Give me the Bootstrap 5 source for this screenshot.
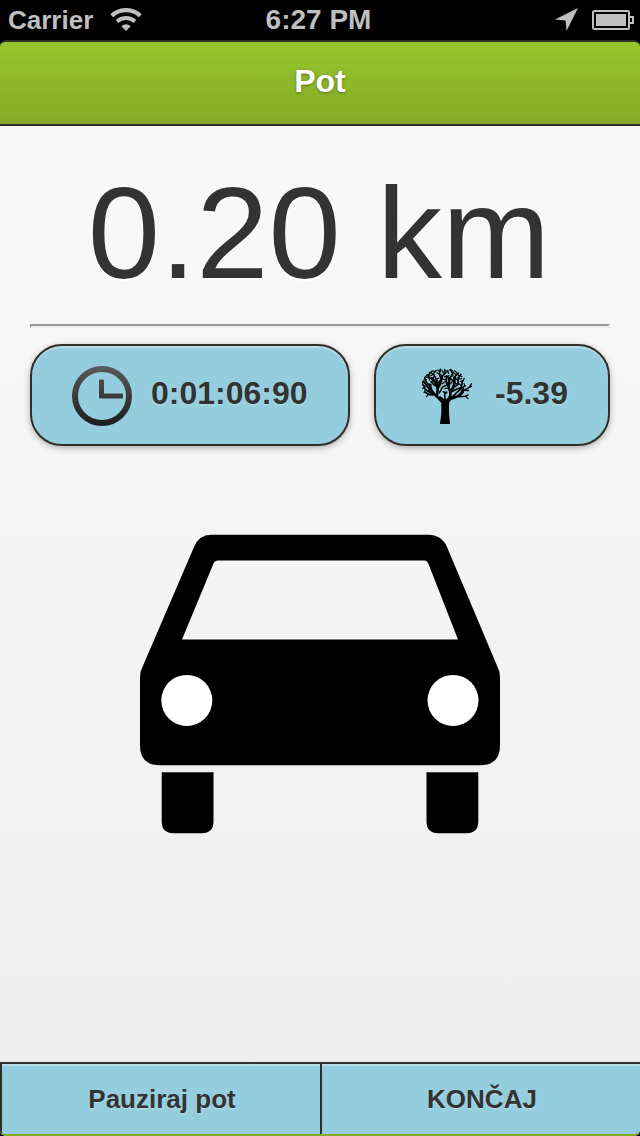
<!DOCTYPE html>
<html lang="sl">
<head>
<meta charset="utf-8">
<meta name="viewport" content="width=device-width, initial-scale=1">
<title>Pot</title>
<link rel="stylesheet" href="https://cdn.jsdelivr.net/npm/bootstrap@5.3.0/dist/css/bootstrap.min.css">
<style>
  body { font-family: "Liberation Sans", Arial, sans-serif; color: #333; background: #000; overflow: hidden; }
  .phone { width: 640px; height: 1136px; background: #000; }
  .statusbar { height: 40px; color: #bfbfbf; font-size: 26px; line-height: 40px; padding: 0 6px 0 8px; }
  .statusbar > div { flex: 1 1 0; }
  .wifi { margin-left: 17px; }
  .clock-text { font-size: 28px; margin-left: -5px; }
  .locate { margin: 0 14px 2px 0; }
  .titlebar { height: 86px; border-top: 2px solid #332e2a; border-bottom: 2px solid #332e2a; border-radius: 6px 6px 0 0;
    background: linear-gradient(#96c62d, #84ab26); color: #fff; font-size: 32px; text-shadow: 0 1px 3px #53701a; padding-bottom: 5px; }
  .page-main { background: linear-gradient(#f9f9f9, #eee); padding: 0 30px; }
  .distance { height: 198px; padding-top: 42px; font-size: 130px; line-height: 130px; text-shadow: 0 2px 0 #fff; white-space: nowrap; margin-left: -2px; }
  .rule { height: 4px; border: 2px solid; border-color: #999 #eee #eee #999; margin-bottom: 16px; }
  .pill { height: 102px; border: 2px solid #332e2a; border-radius: 32px; background: #94cede; font-size: 32px; line-height: 1;
    text-shadow: 0 1px 2px #b4dde7; box-shadow: 0 2px 6px rgba(0,0,0,.3), inset 0 2px 0 rgba(255,255,255,.3); }
  .pill-time { width: 320px; padding-left: 40px; }
  .pill-tree { width: 236px; padding-left: 46px; }
  .pill span { margin-top: -4px; }
  .pill-time span { margin-left: 17px; }
  .pill-tree span { margin-left: 23px; }
  .tree { margin-top: 2px; }
  .car { margin-top: 88px; }
  .actions { height: 74px; border-top: 2px solid #332e2a; border-bottom: 2px solid #84ab26; border-radius: 0 0 5px 5px; overflow: hidden; }
  .actions .btn { border: 0; border-left: 2px solid #332e2a; background: #94cede; color: #333; font-size: 26px; line-height: 1;
    text-shadow: 0 1px 2px #b4dde7; box-shadow: inset 0 2px 0 rgba(255,255,255,.3); padding: 0 0 1px 2px; }
</style>
</head>
<body>
<div class="phone d-flex flex-column">
  <div class="statusbar d-flex fw-bold flex-shrink-0">
    <div class="d-flex align-items-center">Carrier
      <svg class="wifi" width="32" height="24" viewBox="0 0 32 24" fill="none" stroke="#bfbfbf">
        <path d="M1.700 7.700A21 21 0 0 1 30.300 7.700" stroke-width="4.200"/>
        <path d="M7 13.500A13 13 0 0 1 25 13.500" stroke-width="4"/>
        <path d="M11.300 18.300Q16 14 20.700 18.300L16 23Z" fill="#bfbfbf" stroke="none"/>
      </svg>
    </div>
    <div class="clock-text text-center">6:27 PM</div>
    <div class="d-flex align-items-center justify-content-end">
      <svg class="locate" width="23" height="23" viewBox="0 0 23 23"><path d="M23 0 11.500 23 10.500 12.500 0 11.500Z" fill="#bfbfbf"/></svg>
      <svg width="42" height="20" viewBox="0 0 42 20"><rect x="1" y="1" width="36" height="18" rx="1.5" fill="none" stroke="#bfbfbf" stroke-width="2"/><path d="M4 4H34V16H4Z" fill="#bfbfbf"/><path d="M38 7H41V13H38" fill="none" stroke="#bfbfbf" stroke-width="2"/></svg>
    </div>
  </div>

  <header class="titlebar d-flex align-items-center justify-content-center fw-bold flex-shrink-0">Pot</header>

  <main class="page-main flex-grow-1">
    <div class="distance text-center">0.20 km</div>
    <div class="rule"></div>
    <div class="d-flex justify-content-between">
      <div class="pill pill-time d-flex align-items-center fw-bold">
        <svg width="62" height="62" viewBox="0 0 62 62">
          <defs><linearGradient id="dial" x1="0" y1="0" x2="0" y2="62" gradientUnits="userSpaceOnUse"><stop offset="0" stop-color="#5c5c5c"/><stop offset="1" stop-color="#1c1c1c"/></linearGradient></defs>
          <circle cx="30" cy="32" r="27" fill="none" stroke="url(#dial)" stroke-width="6"/>
          <path d="M28 15.500H31Q32 15.500 32 16.500V29.500H50Q51 29.500 51 30.500V33.500Q51 34.500 50 34.500H28.500Q27 34.500 27 33V16.500Q27 15.500 28 15.500Z" fill="url(#dial)"/>
        </svg>
        <span>0:01:06:90</span>
      </div>
      <div class="pill pill-tree d-flex align-items-center fw-bold">
        <svg class="tree" width="50" height="56" viewBox="36 25 150 168" fill="none" stroke="#000" stroke-linecap="round">
          <path d="M90 193Q96 160 94 130L82 112 92 110 105 121 121 108 132 111 118 128Q115 145 120 193Z" fill="#000" stroke="none"/>
          <g stroke-width="8">
            <path d="M96 126Q84 112 72 102Q62 94 60 78M80 108Q86 90 80 75L66 56M83 85Q93 72 95 52"/>
            <path d="M116 123Q126 100 116 84L118 55M124 116Q145 112 158 98M121 98Q132 83 134 68"/>
          </g>
          <g stroke-width="4.800">
            <path d="M72 102Q55 99 45 87L38 73M60 80L48 66 44 54M67 60L55 50 60 38M80 75L78 58 70 42 78 33M94 60L88 43 91 29M95 52L106 39 104 30M85 84L72 76 63 66M60 93L50 77 39 65M77 106L58 105 46 98M88 100L97 83 112 75"/>
            <path d="M117 84L108 68 110 48M118 57L128 43 122 30M134 69L132 54 145 40M130 84L145 74 144 56 153 44M125 96L139 89 154 83 157 65M145 111L166 110 174 106M146 106L162 92 184 80M153 98L160 87M105 120L104 104 110 97M109 100L100 96M128 111L143 96 165 78M133 67L121 56"/>
          </g>
          <g stroke-width="3.400">
            <path d="M45 87L37 85M46 91L42 99M48 66L38 69M44 55L51 45M57 51L49 53M59 41L67 34M71 43L62 48M78 58L87 55M88 43L81 39M79 73L89 65M95 53L101 59M105 40L115 34M98 50L91 44M110 48L103 52M109 55L117 47M126 43L133 34M132 54L140 59M143 43L136 34M145 58L155 57M144 64L136 54M154 82L148 90M157 68L163 56M162 92L176 93M167 110L174 117M165 80L162 71M176 84L185 72M64 75L51 72M55 50L59 61M73 50L67 55M97 73L105 66M111 77L113 68M64 101L56 93M55 105L49 111M63 39L70 45M83 31L90 36M96 31L99 39M111 32L116 41M118 31L127 33M132 40L138 45M149 47L156 51M41 61L50 60M43 78L53 82M69 66L76 66M86 70L82 61M102 44L98 35M122 72L127 65M139 73L145 68M151 66L159 62M153 77L147 72M105 87L112 86M48 49L56 44M67 33L76 36M64 56L70 65M111 57L104 60M124 49L131 49M137 61L129 61M145 46L147 54"/>
          </g>
        </svg>
        <span>-5.39</span>
      </div>
    </div>
    <svg class="car d-block mx-auto" width="360" height="300" viewBox="0 0 360 300">
      <path fill-rule="evenodd" d="M71 .8H288Q301.500.8 307 13L358 134Q360 138 360 143V211Q360 231.300 340 231.300H20Q0 231.300 0 211V143Q0 138 2 134L54 13Q59 .8 71 .8ZM78 26.500Q75 26.500 73.500 29.500L42 105.500H318L288.500 30Q287 26.500 285 26.500Z"/>
      <circle cx="46.800" cy="166.400" r="25.500" fill="#fff"/><circle cx="313" cy="166.400" r="25.500" fill="#fff"/>
      <path d="M21.700 238.200H73.500V287.300Q73.500 299.300 61.500 299.300H33.700Q21.700 299.300 21.700 287.300ZM286.500 238.200H338.300V287.300Q338.300 299.300 326.300 299.300H298.500Q286.500 299.300 286.500 287.300Z"/>
    </svg>
  </main>

  <footer class="actions d-flex flex-shrink-0">
    <button type="button" class="btn w-50 rounded-0 fw-bold">Pauziraj pot</button>
    <button type="button" class="btn w-50 rounded-0 fw-bold">KONČAJ</button>
  </footer>
</div>
<script src="https://cdn.jsdelivr.net/npm/bootstrap@5.3.0/dist/js/bootstrap.bundle.min.js"></script>
</body>
</html>
